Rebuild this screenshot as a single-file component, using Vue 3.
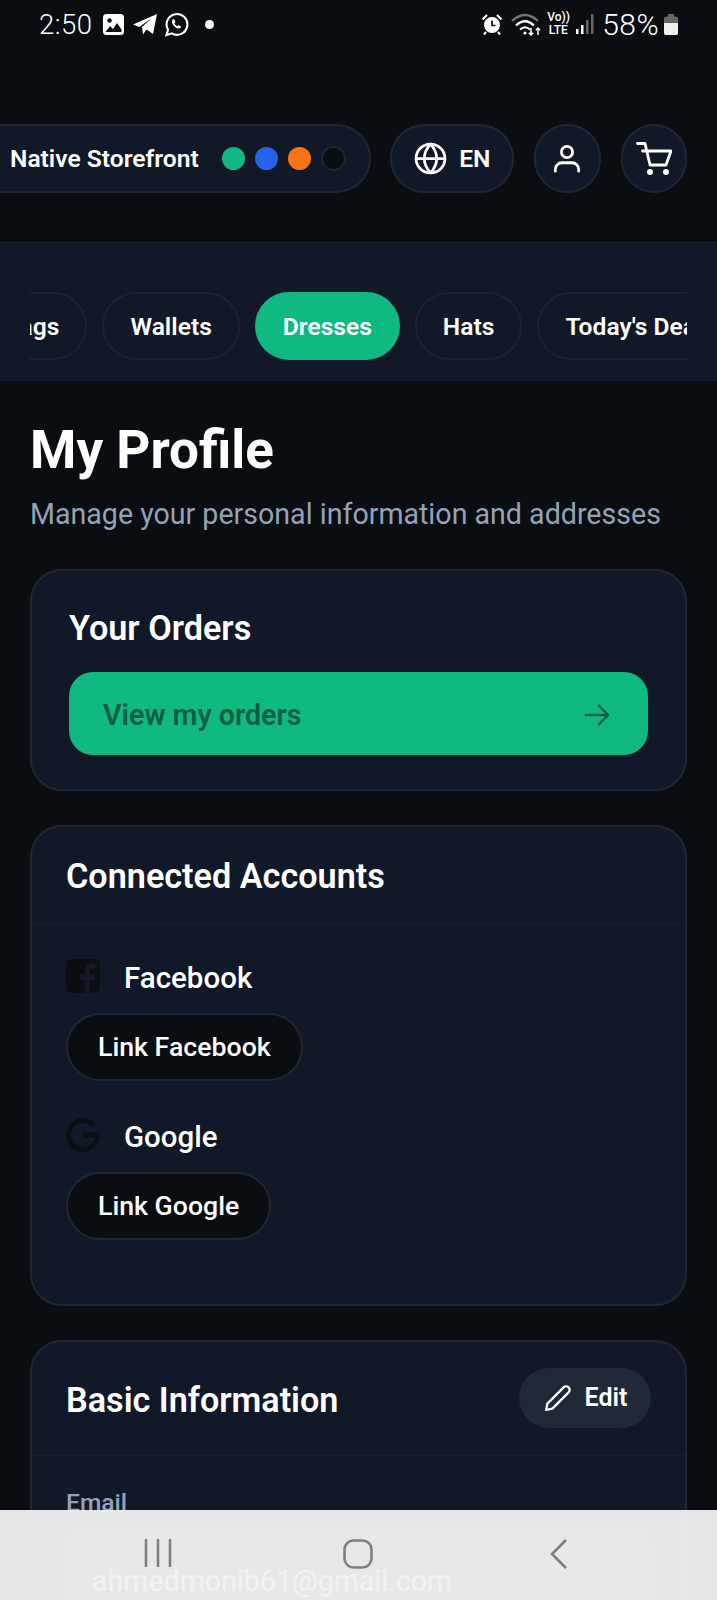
<template>
  <div class="screen">
    <div class="status-bar">
      <div class="status-left">
        <span class="clock">2:50</span>
        <svg class="st-image" viewBox="0 0 21 21" width="21" height="21">
          <rect width="21" height="21" rx="3.500" fill="#fff" />
          <circle cx="6.500" cy="6.500" r="2.300" fill="#0a0d12" />
          <path d="M2.500 18l4.500-6 3 3 4-6 4.500 6.500V18z" fill="#0a0d12" />
        </svg>
        <svg class="st-telegram" viewBox="0 0 24 22" width="24" height="22">
          <path d="M0 11.500L24 1l-4 20-6.500-4.500-3.500 5-1-7.500 9.500-8.500L6 14z" fill="#fff" />
        </svg>
        <svg class="st-whatsapp" viewBox="0 0 26 26" width="25" height="25">
          <path d="M2.500 24l1.700-5.600A10.800 10.800 0 1 1 8 22.200z" fill="none" stroke="#fff" stroke-width="2.200" />
          <path d="M9.500 7.500c-1.500 1-1.600 3-.4 5.200 1.300 2.400 3.600 4.200 5.700 4.500 1.500.2 2.700-.5 3.100-2l-3-1.700-1.200 1.200c-1.200-.6-2.300-1.700-2.900-3l1.200-1.100-1.300-3.100z" fill="#fff" />
        </svg>
        <span class="st-dot"></span>
      </div>
      <div class="status-right">
        <svg class="st-alarm" viewBox="0 0 22 22" width="22" height="22">
          <circle cx="11" cy="12" r="8" fill="#fff" />
          <path d="M11 7.500v5h3.500" fill="none" stroke="#0a0d12" stroke-width="1.700" />
          <path d="M1.500 6.500L6 2M20.500 6.500L16 2M5 19l-2 2.500M17 19l2 2.500" stroke="#fff" stroke-width="2.200" />
        </svg>
        <svg class="st-wifi" viewBox="0 0 30 24" width="30" height="24">
          <path d="M1 9Q14-3 27 9" fill="none" stroke="#777" stroke-width="2.200" />
          <path d="M5 13.500Q14 5 23 13.500" fill="none" stroke="#fff" stroke-width="2.200" />
          <path d="M9 17.500Q14 13 19 17.500" fill="none" stroke="#fff" stroke-width="2" />
          <circle cx="14" cy="21" r="1.600" fill="#fff" />
          <path d="M20 16v7m-2.200-2.200l2.200 2.200 2.200-2.200M27 23v-7m-2.200 2.200l2.200-2.200 2.200 2.200" fill="none" stroke="#fff" stroke-width="1.500" />
        </svg>
        <span class="volte">Vo))<br />LTE</span>
        <svg class="st-signal" viewBox="0 0 18 20" width="18" height="20">
          <rect x="0" y="15" width="2.500" height="5" fill="#fff" />
          <rect x="5" y="11" width="2.500" height="9" fill="#fff" />
          <rect x="10" y="6" width="2.500" height="14" fill="#666" />
          <rect x="15" y="0" width="2.500" height="20" fill="#666" />
        </svg>
        <span class="battery-text">58%</span>
        <svg class="st-battery" viewBox="0 0 14 21" width="14" height="21">
          <rect x="4" y="0" width="6" height="3" fill="#666" />
          <rect x="0" y="2.500" width="14" height="18.500" rx="2" fill="#666" />
          <path d="M0 9h14v10a2 2 0 0 1-2 2H2a2 2 0 0 1-2-2z" fill="#eee" />
        </svg>
      </div>
    </div>

    <header class="top-header">
      <div class="store-pill">
        <span class="store-name">Native Storefront</span>
        <div class="theme-dots">
          <span
            v-for="dot in themeDots"
            :key="dot"
            class="theme-dot"
            :class="dot"
          ></span>
        </div>
      </div>
      <button class="head-btn lang">
        <svg viewBox="0 0 24 24" width="33" height="33" fill="none" stroke="#fff" stroke-width="2">
          <circle cx="12" cy="12" r="10.500" />
          <path d="M1.500 12h21M12 1.500c-6 6.500-6 14.500 0 21M12 1.500c6 6.500 6 14.500 0 21" />
        </svg>
        <span>EN</span>
      </button>
      <button class="head-btn round">
        <svg viewBox="0 0 30 30" width="28" height="28" fill="none" stroke="#fff" stroke-width="3" stroke-linecap="round">
          <circle cx="15" cy="7.500" r="6" />
          <path d="M2.500 28v-2a7 7 0 0 1 7-7h11a7 7 0 0 1 7 7v2" />
        </svg>
      </button>
      <button class="head-btn round">
        <svg viewBox="0 0 36 34" width="36" height="34" fill="none" stroke="#fff" stroke-width="2.800" stroke-linecap="round" stroke-linejoin="round">
          <path d="M1.500 1.500H9L14 23h16l5-14H6.500" />
          <circle cx="14" cy="30" r="2" fill="#fff" stroke-width="2" />
          <circle cx="30" cy="30" r="2" fill="#fff" stroke-width="2" />
        </svg>
      </button>
    </header>

    <nav class="cat-band">
      <div class="cat-scroll">
        <div class="cat-track">
          <span
            v-for="cat in categories"
            :key="cat"
            class="cat-chip"
            :class="{ active: cat === 'Dresses' }"
          >{{ cat }}</span>
        </div>
      </div>
    </nav>

    <main class="content">
      <h1>My Profile</h1>
      <p class="sub">Manage your personal information and addresses</p>

      <section class="card orders">
        <h2>Your Orders</h2>
        <a class="orders-btn">
          <span>View my orders</span>
          <svg viewBox="0 0 24 24" width="30" height="30" fill="none" stroke="#065f46" stroke-width="1.900" stroke-linecap="round" stroke-linejoin="round">
            <path d="M3 12h18M13.500 4.500L21 12l-7.500 7.500" />
          </svg>
        </a>
      </section>

      <section class="card accounts">
        <div class="card-head">
          <h2>Connected Accounts</h2>
        </div>
        <div class="accounts-body">
          <div class="account">
            <div class="account-name">
              <svg viewBox="0 0 34 34" width="34" height="34">
                <path d="M6 0h22a6 6 0 0 1 6 6v22a6 6 0 0 1-6 6h-4V21h4.500l.8-5.500H24V12c0-1.600.7-2.800 2.900-2.800h2.600V4.500c-1-.1-2.500-.3-4-.3-4.100 0-6.800 2.500-6.800 7v4.300h-4.600V21h4.600v13H6a6 6 0 0 1-6-6V6a6 6 0 0 1 6-6z" fill="#0a0d12" />
              </svg>
              <span>Facebook</span>
            </div>
            <button class="link-btn">Link Facebook</button>
          </div>
          <div class="account">
            <div class="account-name">
              <svg viewBox="0 0 34 34" width="34" height="34">
                <path d="M28 7.500A14.500 14.500 0 1 0 31.500 17H17" fill="none" stroke="#0a0d12" stroke-width="5" />
              </svg>
              <span>Google</span>
            </div>
            <button class="link-btn">Link Google</button>
          </div>
        </div>
      </section>

      <section class="card basic">
        <div class="card-head split">
          <h2>Basic Information</h2>
          <button class="edit-btn">
            <svg viewBox="0 0 24 24" width="30" height="30" fill="none" stroke="#fff" stroke-width="1.800" stroke-linecap="round" stroke-linejoin="round">
              <path d="M2.500 21.500l1-5L16.500 3.500a2.800 2.800 0 0 1 4 4L7.500 20.500z" />
            </svg>
            <span>Edit</span>
          </button>
        </div>
        <div class="basic-body">
          <label>Email</label>
          <div class="field">ahmedmonib61@gmail.com</div>
        </div>
      </section>
    </main>

    <div class="nav-overlay">
      <svg viewBox="0 0 28 28" width="28" height="28" fill="none" stroke="#7f7f7f" stroke-width="2.600">
        <path d="M2 0v28M14 0v28M26 0v28" />
      </svg>
      <svg class="nav-home" viewBox="0 0 30 30" width="30" height="30" fill="none" stroke="#7f7f7f" stroke-width="2.600">
        <rect x="1.500" y="1.500" width="27" height="27" rx="9" />
      </svg>
      <svg class="nav-back" viewBox="0 0 18 30" width="18" height="30" fill="none" stroke="#7f7f7f" stroke-width="2.600">
        <path d="M16 1L2 15l14 14" />
      </svg>
    </div>
  </div>
</template>

<script setup>
  // 主题色圆点
  const themeDots = ['green', 'blue', 'orange', 'black']

  // 分类列表
  const categories = ['Bags', 'Wallets', 'Dresses', 'Hats', "Today's Deals"]
</script>

<style>
  html,
  body {
    margin: 0;
    background: #0a0d12;
  }
</style>

<style scoped>
  .screen {
    position: relative;
    width: 717px;
    height: 1600px;
    overflow: hidden;
    background: #0a0d12;
    color: #fff;
    font-family: Roboto, 'Liberation Sans', sans-serif;
  }

  h1,
  h2,
  p {
    margin: 0;
  }

  button {
    font-family: inherit;
    color: #fff;
    cursor: pointer;
  }

  .status-bar {
    height: 48px;
    padding: 0 39px;
    display: flex;
    justify-content: space-between;
    align-items: center;
    box-sizing: border-box;
  }

  .status-left,
  .status-right {
    display: flex;
    align-items: center;
  }

  .clock {
    width: 53px;
    font-size: 27.500px;
    font-weight: 300;
    letter-spacing: 0.5px;
  }

  .st-image {
    margin-left: 11px;
  }

  .st-telegram {
    margin-left: 9px;
  }

  .st-whatsapp {
    margin-left: 7px;
  }

  .st-dot {
    width: 9px;
    height: 9px;
    margin-left: 16px;
    border-radius: 50%;
    background: #fff;
  }

  .st-wifi {
    margin-left: 8px;
  }

  .volte {
    width: 22px;
    margin-left: 6px;
    font-size: 12px;
    line-height: 13px;
    font-weight: 500;
    text-align: center;
  }

  .st-signal {
    margin-left: 7px;
  }

  .battery-text {
    margin-left: 8px;
    font-size: 30px;
    font-weight: 300;
    letter-spacing: 0.4px;
  }

  .st-battery {
    margin-left: 5px;
  }

  .top-header {
    height: 69px;
    margin-top: 76px;
    padding-right: 30px;
    display: flex;
    align-items: stretch;
    gap: 20px;
  }

  .store-pill {
    width: 372px;
    margin-right: -1px;
    padding-left: 10px;
    box-sizing: border-box;
    display: flex;
    align-items: center;
    background: #111827;
    border: 2px solid #1f2733;
    border-left: none;
    border-radius: 0 35px 35px 0;
  }

  .store-name {
    font-size: 24.600px;
    font-weight: 600;
  }

  .theme-dots {
    display: flex;
    align-items: center;
    gap: 10px;
    margin-left: 23px;
  }

  .theme-dot {
    width: 23px;
    height: 23px;
    border-radius: 50%;
  }

  .theme-dot.green {
    background: #10b981;
  }

  .theme-dot.blue {
    background: #2563eb;
  }

  .theme-dot.orange {
    background: #f97316;
  }

  .theme-dot.black {
    width: 25px;
    height: 25px;
    box-sizing: border-box;
    background: #0a0d12;
    border: 2px solid #1f2733;
  }

  .head-btn {
    background: #111827;
    border: 2px solid #1f2733;
    border-radius: 35px;
    display: flex;
    align-items: center;
    justify-content: center;
    padding: 0;
    box-sizing: border-box;
  }

  .head-btn.lang {
    width: 124px;
    gap: 12px;
    font-size: 24.600px;
    font-weight: 600;
  }

  .head-btn.round {
    width: 66.500px;
  }

  .cat-band {
    height: 139px;
    margin-top: 49px;
    padding: 49px 30px 0;
    box-sizing: border-box;
    background: #111827;
    border-top: 1px solid #1c2431;
  }

  .cat-scroll {
    overflow: hidden;
  }

  .cat-track {
    display: flex;
    gap: 15px;
    margin-left: -54px;
    width: max-content;
  }

  .cat-chip {
    height: 68px;
    padding: 0 26px;
    box-sizing: border-box;
    display: flex;
    align-items: center;
    border: 2px solid #1c2431;
    border-radius: 34px;
    font-size: 24.600px;
    font-weight: 600;
    white-space: nowrap;
  }

  .cat-chip.active {
    background: #10b981;
    border-color: #10b981;
  }

  .content {
    padding: 39px 30px 0;
  }

  h1 {
    font-size: 53px;
    line-height: 60px;
    font-weight: 700;
  }

  .sub {
    margin-top: 16px;
    font-size: 28.600px;
    line-height: 36px;
    color: #94a3b8;
    white-space: nowrap;
  }

  .card {
    margin-top: 34px;
    background: #111827;
    border: 2px solid #1f2733;
    border-radius: 32px;
  }

  .card h2 {
    font-size: 34.200px;
    line-height: 40px;
    font-weight: 600;
  }

  .orders {
    margin-top: 37px;
    padding: 37px;
    height: 222px;
    box-sizing: border-box;
  }

  .orders-btn {
    margin-top: 24px;
    height: 83px;
    padding: 2px 36px 0 34px;
    box-sizing: border-box;
    display: flex;
    align-items: center;
    justify-content: space-between;
    background: #10b981;
    border-radius: 24px;
    color: #065f46;
    font-size: 28.600px;
    font-weight: 600;
  }

  .card-head {
    height: 98px;
    padding: 0 34px;
    display: flex;
    align-items: center;
    box-sizing: border-box;
    border-bottom: 1px solid #1a2230;
  }

  .card-head.split {
    height: 114px;
    justify-content: space-between;
  }

  .card-head.split h2 {
    padding-top: 2px;
  }

  .accounts {
    height: 481px;
    box-sizing: border-box;
  }

  .accounts-body {
    padding: 34px 34px 0;
    display: flex;
    flex-direction: column;
    gap: 37px;
  }

  .account {
    display: flex;
    flex-direction: column;
    align-items: flex-start;
    gap: 20px;
  }

  .account-name {
    height: 34px;
    display: flex;
    align-items: flex-start;
    gap: 24px;
    font-size: 29.500px;
    line-height: 34px;
    font-weight: 500;
  }

  .account-name span {
    margin-top: 2px;
  }

  .link-btn {
    height: 68px;
    padding: 0 30px;
    background: #0a0d12;
    border: 2px solid #1f2733;
    border-radius: 34px;
    font-size: 26.700px;
    font-weight: 500;
  }

  .edit-btn {
    width: 132px;
    height: 60px;
    margin-top: -2px;
    display: flex;
    align-items: center;
    justify-content: center;
    gap: 12px;
    padding: 0;
    background: #1f2937;
    border: none;
    border-radius: 30px;
    font-size: 25px;
    font-weight: 600;
  }

  .basic-body {
    padding: 33px 34px;
  }

  .basic-body label {
    display: block;
    font-size: 24.600px;
    line-height: 28px;
    font-weight: 500;
    color: #94a3b8;
  }

  .field {
    margin-top: 14px;
    height: 100px;
    padding: 0 26px;
    display: flex;
    align-items: center;
    background: #1f2937;
    border-radius: 20px;
    font-size: 28.600px;
  }

  /* 半透明系统导航栏 */
  .nav-overlay {
    position: absolute;
    left: 0;
    right: 0;
    bottom: 0;
    height: 90px;
    box-sizing: border-box;
    padding: 29px 0 0 144px;
    display: flex;
    align-items: flex-start;
    background: rgba(242, 242, 243, 0.95);
  }

  .nav-home {
    margin-left: 171px;
  }

  .nav-back {
    margin-left: 177px;
  }
</style>
